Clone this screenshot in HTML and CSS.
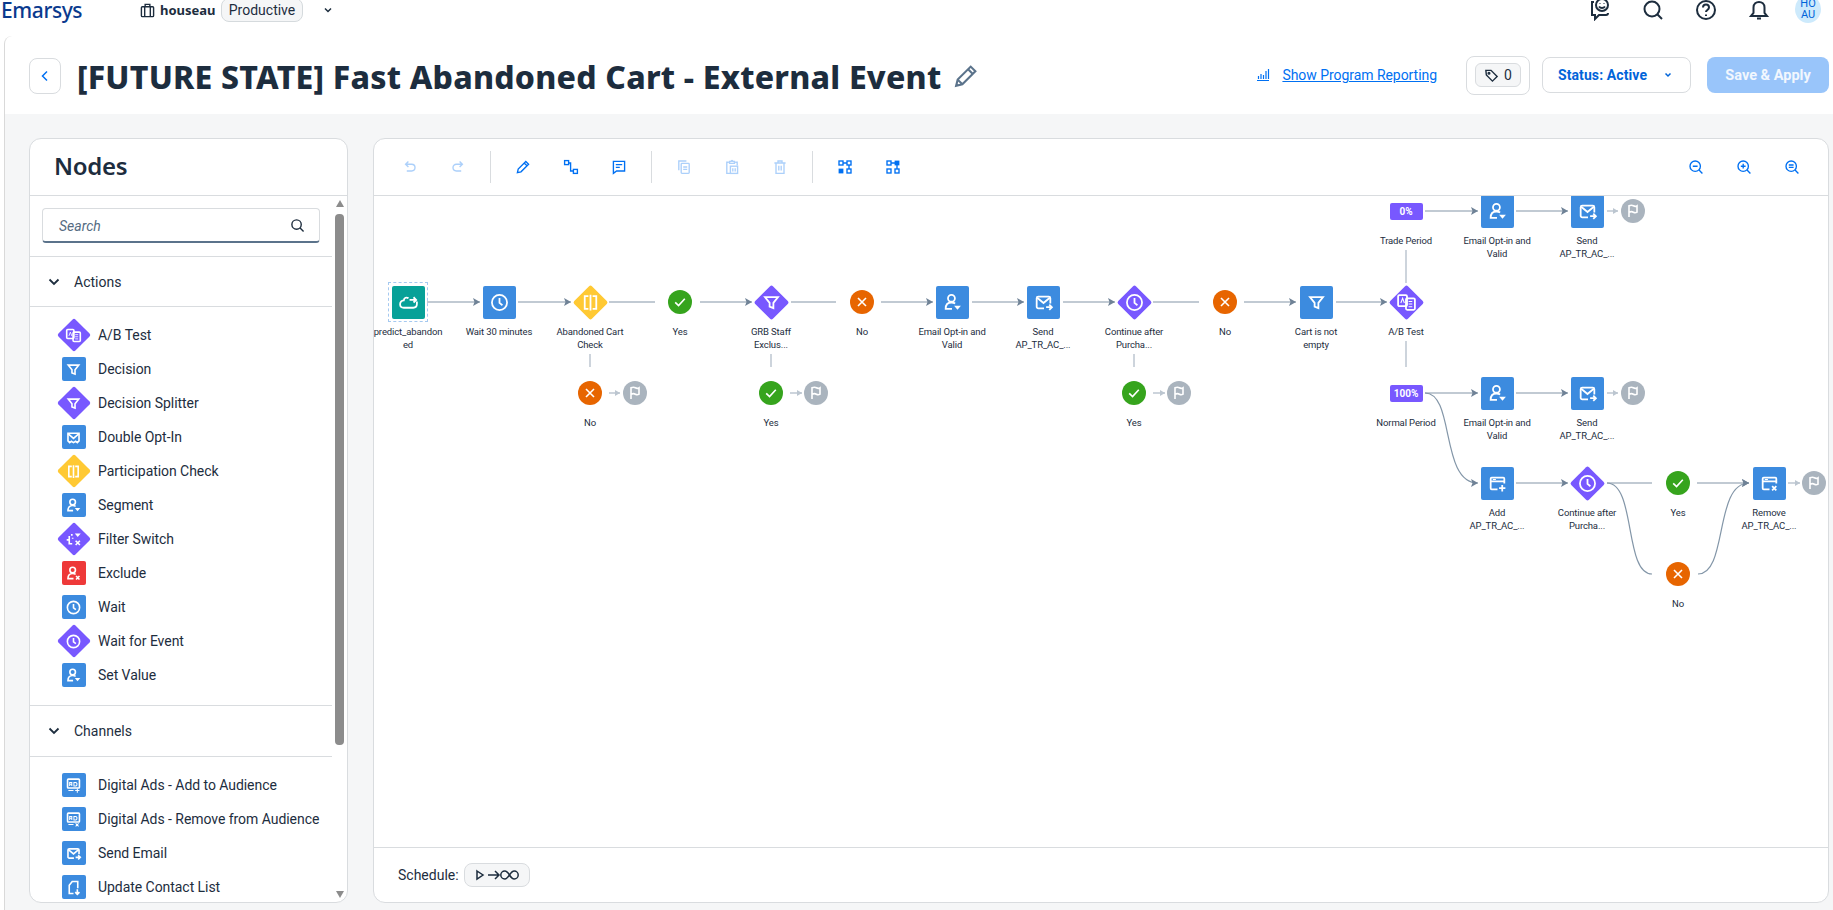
FILE: index.html
```html
<!DOCTYPE html>
<html>
    <head>
        <title>Fast Abandoned Cart - External Event</title>
        <meta charset="UTF-8">
        <link rel="stylesheet" href="styles.css">
    </head>
    <body>
        <!-- icon sprite -->
        <svg class="sprite" xmlns="http://www.w3.org/2000/svg">
            <symbol id="i-clock" viewBox="0 0 20 20"><circle cx="10" cy="10" r="7.2"/><path d="M10 5.8v4.6l2.8 2.2"/></symbol>
            <symbol id="i-filter" viewBox="0 0 20 20"><path d="M3.8 4.8h12.4l-4.4 5.6v5l-3.6-1.4v-3.6z"/></symbol>
            <symbol id="i-ab" viewBox="0 0 20 20"><rect x="2" y="3" width="8.5" height="10.5" rx="1.2"/><rect x="9.5" y="6" width="8.5" height="11" rx="1.2"/><path d="M4.6 10.5l1.7-4.5 1.7 4.500M12 9h3.500M12 11.500h3.500M12 14h3.500" stroke-width="1"/></symbol>
            <symbol id="i-door" viewBox="0 0 20 20"><path d="M8 4H4.500v12H8M12 4h3.500v12H12M10 2.500v15"/></symbol>
            <symbol id="i-segment" viewBox="0 0 20 20"><circle cx="9" cy="6" r="3.300"/><path d="M9.500 16H3.500c0-4 2-6 5.500-6 1.500 0 2.500.3 3.500 1"/><path class="solid" d="M11.500 13h6.500l-3.250 3.800z"/></symbol>
            <symbol id="i-exclude" viewBox="0 0 20 20"><circle cx="9" cy="6" r="3.300"/><path d="M10 16H3.500c0-4 2-6 5.500-6 1.500 0 2.500.3 3.500 1M13 13l4 4M17 13l-4 4"/></symbol>
            <symbol id="i-optin" viewBox="0 0 20 20"><path d="M3.500 14V5h13v9l-2 2-2-1.500L10 16l-2.500-1.500L5.500 16z"/><path d="M3.500 5.500L10 11l6.500-5.500"/></symbol>
            <symbol id="i-send" viewBox="0 0 20 20"><path d="M10.500 15.500H5A1.500 1.500 0 0 1 3.500 14V6A1.500 1.500 0 0 1 5 4.500h10A1.500 1.500 0 0 1 16.500 6v5"/><path d="M4 5.500L10 10.500l6-5M12.500 14.500h5.500M15.500 12l2.500 2.500-2.500 2.500"/></symbol>
            <symbol id="i-switch" viewBox="0 0 20 20"><path d="M7 4.500h2M5 6v9h3.500M2 10.500h3M9 8v1"/><path class="solid" d="M11.500 3h7l-3.500 4z"/><path d="M12.500 11.500l5 5M17.500 11.500l-5 5"/></symbol>
            <symbol id="i-ad-add" viewBox="0 0 20 20"><rect x="3" y="2.500" width="14" height="10.500" rx="1"/><path d="M5.500 10.500V6.500h2.500v4M5.500 8.500h2.500M10.500 6.500v4h2.500l1-1v-2l-1-1zM4 16h6M14.500 13.500v5M12 16h5" stroke-width="1.200"/></symbol>
            <symbol id="i-ad-remove" viewBox="0 0 20 20"><rect x="3" y="2.500" width="14" height="10.500" rx="1"/><path d="M5.500 10.500V6.500h2.500v4M5.500 8.500h2.500M10.500 6.500v4h2.500l1-1v-2l-1-1zM4 16h6M12.500 14.500l3.500 3.500M16 14.500L12.500 18" stroke-width="1.200"/></symbol>
            <symbol id="i-update" viewBox="0 0 20 20"><path d="M10 17H5V7.500L8.500 3H15v8"/><path d="M14.500 12v5.500M12 15.500l2.500 2.500 2.500-2.500"/></symbol>
            <symbol id="i-cloud" viewBox="0 0 20 20"><path d="M10 6C8 4.500 5.800 5.500 5.500 8 3.500 8.300 2 9.700 2 11.700 2 13.600 3.500 15 5.500 15h9c2 0 3.500-1.500 3.500-3.500V9"/><path d="M11 7.500h6M14.800 5l2.500 2.500-2.500 2.500"/></symbol>
            <symbol id="i-list-add" viewBox="0 0 20 20"><path d="M10 15.500H4.500a1 1 0 0 1-1-1v-9a1 1 0 0 1 1-1h11a1 1 0 0 1 1 1V10M3.500 8h13"/><path class="thin" d="M5.500 6.200h3"/><path d="M14.500 11.500v6M11.500 14.500h6"/></symbol>
            <symbol id="i-list-remove" viewBox="0 0 20 20"><path d="M10 15.500H4.500a1 1 0 0 1-1-1v-9a1 1 0 0 1 1-1h11a1 1 0 0 1 1 1V10M3.500 8h13"/><path class="thin" d="M5.500 6.200h3"/><path d="M12.500 12.500l4 4M16.500 12.500l-4 4"/></symbol>
            <symbol id="i-flag" viewBox="0 0 20 20"><path d="M5 17.500V3.500c2.500-1 4.500-.6 5.500 0s3 1 4.500 0v8c-1.500 1-3.500.6-4.500 0s-3-1-5.500 0z"/></symbol>
            <symbol id="i-x" viewBox="0 0 20 20"><path d="M5 5l10 10M15 5L5 15"/></symbol>
            <symbol id="i-check" viewBox="0 0 20 20"><path d="M4 10.500l4.200 4L16 6"/></symbol>
        </svg>

        <div class="topbar">
            <span class="logo">Emarsys</span>
            <svg class="account-icon" viewBox="0 0 16 16"><rect x="1.500" y="4" width="13" height="10.500" rx="1"/><path d="M5 14.500V4M11 14.500V4M5.500 4V1.500h5V4"/></svg>
            <span class="account">houseau</span>
            <span class="env">Productive</span>
            <svg class="env-caret" viewBox="0 0 10 10"><path d="M2 3.500L5 6.500 8 3.500"/></svg>
            <div class="top-actions">
                <svg class="top-icon" viewBox="0 0 22 22"><path d="M5 3H3v13h3v4l4-4h7c1.500 0 2-1 2-2"/><circle cx="13" cy="6" r="6"/><path d="M10 7.500c1.500 2 4.500 2 6 0M11 4v.5M15 4v.5"/></svg>
                <svg class="top-icon" viewBox="0 0 22 22"><circle cx="10" cy="10" r="7.500"/><path d="M15.500 15.500l4.500 4.500"/></svg>
                <svg class="top-icon" viewBox="0 0 22 22"><circle cx="11" cy="11" r="9"/><path d="M8 8.500c0-4 6-4 6 0 0 2.500-3 2.500-3 4.500M11 15.500v1.500"/></svg>
                <svg class="top-icon" viewBox="0 0 22 22"><path d="M3 17h16l-2.500-3V8.500C16.500 1 5.500 1 5.500 8.500V14zM9 19.500h4"/></svg>
                <span class="avatar">HO<br>AU</span>
            </div>
        </div>

        <div class="page">
            <div class="page-head">
                <button class="back"><svg viewBox="0 0 12 12"><path d="M8 1.500L3.500 6 8 10.500"/></svg></button>
                <h1 class="title">[FUTURE STATE] Fast Abandoned Cart - External Event</h1>
                <svg class="title-edit" viewBox="0 0 24 24"><path d="M3 21l1.500-6L17 2.500l4.500 4.500L9 19.500zM14.500 5l4.500 4.500M4.500 15L9 19.500"/></svg>
                <a class="report" href="#">
                    <svg viewBox="0 0 14 14"><path d="M1 12.500h12M2.500 11V8M5 11V6M7.500 11V7M10 11V3M12.500 11V1"/></svg>
                    <span class="report-text">Show Program Reporting</span>
                </a>
                <div class="tag-box">
                    <span class="tag-pill">
                        <svg viewBox="0 0 16 16"><path d="M2 2.500h5.500l6.500 6.500-5 5L2.500 7.500z"/><circle cx="5.300" cy="5.600" r=".9"/></svg>
                        0
                    </span>
                </div>
                <button class="status">Status: Active <svg viewBox="0 0 10 10"><path d="M2.500 3.500L5 6 7.500 3.500"/></svg></button>
                <button class="save">Save &amp; Apply</button>
            </div>

            <div class="workspace">
                <aside class="panel nodes">
                    <div class="panel-head">Nodes</div>
                    <div class="nodes-body">
                        <div class="nodes-list">
                            <div class="search-row">
                                <div class="search">
                                    <span>Search</span>
                                    <svg viewBox="0 0 16 16"><circle cx="7" cy="7" r="5"/><path d="M10.700 10.700L14.500 14.500"/></svg>
                                </div>
                            </div>
                            <div class="section-head">
                                <svg viewBox="0 0 12 12"><path d="M1.500 3.500L6 8l4.500-4.500"/></svg>Actions
                            </div>
                            <ul class="items">
                                <li><span class="gem purple"><svg class="ico"><use href="#i-ab"/></svg></span>A/B Test</li>
                                <li><span class="tile blue"><svg class="ico"><use href="#i-filter"/></svg></span>Decision</li>
                                <li><span class="gem purple"><svg class="ico"><use href="#i-filter"/></svg></span>Decision Splitter</li>
                                <li><span class="tile blue"><svg class="ico"><use href="#i-optin"/></svg></span>Double Opt-In</li>
                                <li><span class="gem yellow"><svg class="ico"><use href="#i-door"/></svg></span>Participation Check</li>
                                <li><span class="tile blue"><svg class="ico"><use href="#i-segment"/></svg></span>Segment</li>
                                <li><span class="gem purple"><svg class="ico"><use href="#i-switch"/></svg></span>Filter Switch</li>
                                <li><span class="tile red"><svg class="ico"><use href="#i-exclude"/></svg></span>Exclude</li>
                                <li><span class="tile blue"><svg class="ico"><use href="#i-clock"/></svg></span>Wait</li>
                                <li><span class="gem purple"><svg class="ico"><use href="#i-clock"/></svg></span>Wait for Event</li>
                                <li><span class="tile blue"><svg class="ico"><use href="#i-segment"/></svg></span>Set Value</li>
                            </ul>
                            <div class="section-head section-next">
                                <svg viewBox="0 0 12 12"><path d="M1.500 3.500L6 8l4.500-4.500"/></svg>Channels
                            </div>
                            <ul class="items">
                                <li><span class="tile blue"><svg class="ico"><use href="#i-ad-add"/></svg></span>Digital Ads - Add to Audience</li>
                                <li><span class="tile blue"><svg class="ico"><use href="#i-ad-remove"/></svg></span>Digital Ads - Remove from Audience</li>
                                <li><span class="tile blue"><svg class="ico"><use href="#i-send"/></svg></span>Send Email</li>
                                <li><span class="tile blue"><svg class="ico"><use href="#i-update"/></svg></span>Update Contact List</li>
                            </ul>
                        </div>
                        <div class="scrollbar">
                            <span class="arrow-up"></span>
                            <span class="thumb"></span>
                            <span class="arrow-down"></span>
                        </div>
                    </div>
                </aside>

                <section class="panel program">
                    <div class="toolbar">
                        <button class="tool off"><svg viewBox="0 0 20 20"><path d="M8 3L4.500 6.500 8 10M5 6.500h7a4 4 0 0 1 0 8.500H6"/></svg></button>
                        <button class="tool off"><svg viewBox="0 0 20 20"><path d="M12 3l3.500 3.500L12 10M15 6.500H8a4 4 0 0 0 0 8.500h6"/></svg></button>
                        <span class="tool-sep"></span>
                        <button class="tool"><svg viewBox="0 0 20 20"><path d="M3 17l1-4.500L13.500 3 17 6.500 7.500 16zM11.500 5l3.500 3.500"/></svg></button>
                        <button class="tool"><svg viewBox="0 0 20 20"><rect x="2" y="2" width="5" height="5"/><rect x="13" y="13" width="5" height="5"/><path d="M7 5h2.500v10H13"/></svg></button>
                        <button class="tool"><svg viewBox="0 0 20 20"><path d="M3 3h14v12H7l-4 3zM6 7h8M6 10.500h5"/></svg></button>
                        <span class="tool-sep"></span>
                        <button class="tool off"><svg viewBox="0 0 20 20"><path d="M3.500 14V2.500H13"/><rect x="6.500" y="5.500" width="10" height="12.500" rx="1"/><path d="M9 10h5M9 13h5"/></svg></button>
                        <button class="tool off"><svg viewBox="0 0 20 20"><path d="M6 4H3.500v14H8M14 4h2.500v4M7 5.500V3h2c0-1.500 2-1.500 2 0h2v2.500z"/><rect x="8" y="9" width="9" height="9"/><path d="M11 11.500v4M14 11.500v4"/></svg></button>
                        <button class="tool off"><svg viewBox="0 0 20 20"><path d="M3 5h14M7.500 5V2.500h5V5M5 5v13h10V5M8.500 8.500v6M11.500 8.500v6"/></svg></button>
                        <span class="tool-sep"></span>
                        <button class="tool"><svg viewBox="0 0 20 20"><rect x="2.500" y="2.500" width="5" height="5"/><rect x="12.500" y="2.500" width="5" height="5"/><rect class="solid" x="2" y="12" width="6" height="6"/><rect x="12.500" y="12.500" width="5" height="5"/><path d="M7.500 5h5M15 7.500v5"/></svg></button>
                        <button class="tool"><svg viewBox="0 0 20 20"><rect x="2.500" y="2.500" width="5" height="5"/><rect class="solid" x="12" y="2" width="6" height="6"/><rect x="2.500" y="12.500" width="5" height="5"/><rect x="12.500" y="12.500" width="5" height="5"/><path d="M7.500 5h5M15 7.500v5"/></svg></button>
                        <span class="tool-gap"></span>
                        <button class="tool"><svg viewBox="0 0 20 20"><circle cx="9" cy="9" r="6.500"/><path d="M13.800 13.800L18 18M6 9h6"/></svg></button>
                        <button class="tool"><svg viewBox="0 0 20 20"><circle cx="9" cy="9" r="6.500"/><path d="M13.800 13.800L18 18M6 9h6M9 6v6"/></svg></button>
                        <button class="tool"><svg viewBox="0 0 20 20"><circle cx="9" cy="9" r="6.500"/><path d="M13.800 13.800L18 18M6 7.500h6M6 10.500h6"/></svg></button>
                    </div>

                    <div class="canvas">
                        <svg class="edges">
                            <defs>
                                <marker id="tip" markerUnits="userSpaceOnUse" markerWidth="7" markerHeight="8" refX="7" refY="4" orient="auto"><path class="tip" d="M0 0L7 4 0 8 1.500 4z"/></marker>
                                <marker id="tip-light" markerUnits="userSpaceOnUse" markerWidth="5" markerHeight="6" refX="5" refY="3" orient="auto"><path class="tip-light" d="M0 0L5 3 0 6z"/></marker>
                            </defs>
                            <g class="edge">
                                <path marker-end="url(#tip)" d="M53 106H106"/>
                                <path marker-end="url(#tip)" d="M144 106H197"/>
                                <path d="M235 106H281"/>
                                <path marker-end="url(#tip)" d="M326 106H378"/>
                                <path d="M417 106H462"/>
                                <path marker-end="url(#tip)" d="M507 106H559"/>
                                <path marker-end="url(#tip)" d="M598 106H650"/>
                                <path marker-end="url(#tip)" d="M689 106H741"/>
                                <path d="M779 106H825"/>
                                <path marker-end="url(#tip)" d="M870 106H922"/>
                                <path marker-end="url(#tip)" d="M962 106H1013"/>
                                <path marker-end="url(#tip)" d="M1051 15H1104"/>
                                <path marker-end="url(#tip)" d="M1142 15H1194"/>
                                <path marker-end="url(#tip)" d="M1051 197H1104"/>
                                <path marker-end="url(#tip)" d="M1142 197H1194"/>
                                <path marker-end="url(#tip)" d="M1051 197C1081 197 1066 287 1104 287"/>
                                <path marker-end="url(#tip)" d="M1142 287H1194"/>
                                <path d="M1233 287H1278"/>
                                <path d="M1233 287C1262 287 1250 378 1278 378"/>
                                <path marker-end="url(#tip)" d="M1323 287H1375"/>
                                <path marker-end="url(#tip)" d="M1324 378C1354 378 1340 287 1375 287"/>
                            </g>
                            <g class="edge-light">
                                <path d="M216 158V171"/>
                                <path d="M397 158V171"/>
                                <path d="M760 158V171"/>
                                <path d="M1032 54V87"/>
                                <path d="M1032 145V171"/>
                                <path marker-end="url(#tip-light)" d="M235 197H246"/>
                                <path marker-end="url(#tip-light)" d="M416 197H428"/>
                                <path marker-end="url(#tip-light)" d="M779 197H791"/>
                                <path marker-end="url(#tip-light)" d="M1233 15H1244"/>
                                <path marker-end="url(#tip-light)" d="M1233 197H1244"/>
                                <path marker-end="url(#tip-light)" d="M1414 287H1426"/>
                            </g>
                        </svg>

                        <div class="node" style="left:-14px;top:89px"><span class="start"><span class="tile teal"><svg class="ico"><use href="#i-cloud"/></svg></span></span><p>predict_abandon<br>ed</p></div>
                        <div class="node" style="left:77px;top:89px"><span class="tile blue"><svg class="ico"><use href="#i-clock"/></svg></span><p>Wait 30 minutes</p></div>
                        <div class="node" style="left:168px;top:89px"><span class="gem yellow"><svg class="ico"><use href="#i-door"/></svg></span><p>Abandoned Cart<br>Check</p></div>
                        <div class="node" style="left:258px;top:89px"><span class="dot green"><svg class="ico"><use href="#i-check"/></svg></span><p>Yes</p></div>
                        <div class="node" style="left:349px;top:89px"><span class="gem purple"><svg class="ico"><use href="#i-filter"/></svg></span><p>GRB Staff<br>Exclus...</p></div>
                        <div class="node" style="left:440px;top:89px"><span class="dot orange"><svg class="ico"><use href="#i-x"/></svg></span><p>No</p></div>
                        <div class="node" style="left:530px;top:89px"><span class="tile blue"><svg class="ico"><use href="#i-segment"/></svg></span><p>Email Opt-in and<br>Valid</p></div>
                        <div class="node" style="left:621px;top:89px"><span class="tile blue"><svg class="ico"><use href="#i-send"/></svg></span><p>Send<br>AP_TR_AC_...</p></div>
                        <div class="node" style="left:712px;top:89px"><span class="gem purple"><svg class="ico"><use href="#i-clock"/></svg></span><p>Continue after<br>Purcha...</p></div>
                        <div class="node" style="left:803px;top:89px"><span class="dot orange"><svg class="ico"><use href="#i-x"/></svg></span><p>No</p></div>
                        <div class="node" style="left:894px;top:89px"><span class="tile blue"><svg class="ico"><use href="#i-filter"/></svg></span><p>Cart is not<br>empty</p></div>
                        <div class="node" style="left:984px;top:89px"><span class="gem purple"><svg class="ico"><use href="#i-ab"/></svg></span><p>A/B Test</p></div>

                        <div class="node" style="left:168px;top:180px"><span class="dot orange"><svg class="ico"><use href="#i-x"/></svg></span><p>No</p></div>
                        <div class="node" style="left:213px;top:180px"><span class="dot grey"><svg class="ico"><use href="#i-flag"/></svg></span></div>
                        <div class="node" style="left:349px;top:180px"><span class="dot green"><svg class="ico"><use href="#i-check"/></svg></span><p>Yes</p></div>
                        <div class="node" style="left:394px;top:180px"><span class="dot grey"><svg class="ico"><use href="#i-flag"/></svg></span></div>
                        <div class="node" style="left:712px;top:180px"><span class="dot green"><svg class="ico"><use href="#i-check"/></svg></span><p>Yes</p></div>
                        <div class="node" style="left:757px;top:180px"><span class="dot grey"><svg class="ico"><use href="#i-flag"/></svg></span></div>

                        <div class="node" style="left:984px;top:-2px"><span class="pct">0%</span><p>Trade Period</p></div>
                        <div class="node" style="left:1075px;top:-2px"><span class="tile blue"><svg class="ico"><use href="#i-segment"/></svg></span><p>Email Opt-in and<br>Valid</p></div>
                        <div class="node" style="left:1165px;top:-2px"><span class="tile blue"><svg class="ico"><use href="#i-send"/></svg></span><p>Send<br>AP_TR_AC_...</p></div>
                        <div class="node" style="left:1211px;top:-2px"><span class="dot grey"><svg class="ico"><use href="#i-flag"/></svg></span></div>

                        <div class="node" style="left:984px;top:180px"><span class="pct">100%</span><p>Normal Period</p></div>
                        <div class="node" style="left:1075px;top:180px"><span class="tile blue"><svg class="ico"><use href="#i-segment"/></svg></span><p>Email Opt-in and<br>Valid</p></div>
                        <div class="node" style="left:1165px;top:180px"><span class="tile blue"><svg class="ico"><use href="#i-send"/></svg></span><p>Send<br>AP_TR_AC_...</p></div>
                        <div class="node" style="left:1211px;top:180px"><span class="dot grey"><svg class="ico"><use href="#i-flag"/></svg></span></div>

                        <div class="node" style="left:1075px;top:270px"><span class="tile blue"><svg class="ico"><use href="#i-list-add"/></svg></span><p>Add<br>AP_TR_AC_...</p></div>
                        <div class="node" style="left:1165px;top:270px"><span class="gem purple"><svg class="ico"><use href="#i-clock"/></svg></span><p>Continue after<br>Purcha...</p></div>
                        <div class="node" style="left:1256px;top:270px"><span class="dot green"><svg class="ico"><use href="#i-check"/></svg></span><p>Yes</p></div>
                        <div class="node" style="left:1347px;top:270px"><span class="tile blue"><svg class="ico"><use href="#i-list-remove"/></svg></span><p>Remove<br>AP_TR_AC_...</p></div>
                        <div class="node" style="left:1392px;top:270px"><span class="dot grey"><svg class="ico"><use href="#i-flag"/></svg></span></div>
                        <div class="node" style="left:1256px;top:361px"><span class="dot orange"><svg class="ico"><use href="#i-x"/></svg></span><p>No</p></div>
                    </div>

                    <div class="schedule">
                        Schedule:
                        <span class="schedule-pill">
                            <svg viewBox="0 0 46 16"><path d="M3 4l6 4-6 4z"/><path d="M14 8h11M21 4l4 4-4 4"/><path d="M35.500 8c-1.700-2.700-3.200-4-4.700-4a4 4 0 0 0 0 8c1.500 0 3-1.300 4.700-4s3.200-4 4.700-4a4 4 0 0 1 0 8c-1.500 0-3-1.300-4.700-4z"/></svg>
                        </span>
                    </div>
                </section>
            </div>
        </div>
    </body>
</html>
```

FILE: styles.css
```css
html, body {
    margin: 0;
    padding: 0;
    height: 100%;
    overflow: hidden;
    background-color: #fff;
    color: #1d2d3e;
    font-family: "Roboto", "Liberation Sans", sans-serif;
    font-size: 14px;
}
body {
    display: flex;
    flex-direction: column;
}
button {
    font-family: inherit;
    cursor: pointer;
}
svg {
    fill: none;
    stroke: currentColor;
    stroke-width: 1.5;
}
.sprite {
    display: none;
}
.solid {
    fill: currentColor;
    stroke: none;
}
.thin {
    stroke-width: 1;
}

/* top bar */
.topbar {
    flex: none;
    height: 36px;
    box-sizing: border-box;
    padding: 0 12px 16px 1px;
    display: flex;
    align-items: center;
}
.logo {
    width: 139px;
    color: #0a3a8e;
    font-family: "Noto Sans", sans-serif;
    font-size: 21px;
    font-weight: 500;
    letter-spacing: -0.4px;
    line-height: 20px;
}
.account-icon {
    width: 15px;
    height: 15px;
    margin-right: 5px;
    color: #1d2d3e;
}
.account {
    width: 61px;
    font-family: "Noto Sans", sans-serif;
    font-weight: 700;
    font-size: 13px;
}
.env {
    box-sizing: border-box;
    width: 82px;
    height: 24px;
    line-height: 22px;
    text-align: center;
    border: 1px solid #d5dadd;
    border-radius: 8px;
    background: #f5f6f7;
    font-size: 14px;
}
.env-caret {
    width: 10px;
    height: 10px;
    margin-left: 20px;
}
.top-actions {
    margin-left: auto;
    display: flex;
    align-items: center;
    gap: 31px;
}
.top-icon {
    width: 22px;
    height: 22px;
    stroke-width: 2;
}
.avatar {
    box-sizing: border-box;
    width: 26px;
    height: 28px;
    padding-top: 3px;
    border-radius: 50%;
    background: #cdeafc;
    color: #0064d9;
    font-size: 11px;
    line-height: 11px;
    text-align: center;
    margin: -3px 0 0 -6px;
}

/* page */
.page {
    flex: 1;
    min-height: 0;
    margin-left: 4px;
    border-left: 1px solid #d9d9d9;
    border-top-left-radius: 8px;
    display: flex;
    flex-direction: column;
}
.page-head {
    flex: none;
    height: 78px;
    display: flex;
    align-items: center;
    padding: 0 4px 0 24px;
}
.back {
    width: 32px;
    height: 36px;
    padding: 0;
    margin: 2px 16px 0 0;
    border: 1px solid #d9dcdf;
    border-radius: 8px;
    background: #fff;
    color: #0070f2;
}
.back svg {
    width: 12px;
    height: 12px;
    display: block;
    margin: auto;
}
.title {
    margin: 2px 0 0;
    font-family: "Noto Sans", sans-serif;
    font-size: 32px;
    font-weight: 800;
    letter-spacing: 0.22px;
    white-space: nowrap;
}
.title-edit {
    width: 25px;
    height: 25px;
    margin: 2px 0 0 12px;
    color: #5b738b;
    stroke-width: 2;
}
.report {
    margin: 0 0 0 auto;
    display: flex;
    align-items: center;
    color: #0070f2;
    text-decoration: none;
    gap: 12px;
    letter-spacing: -0.05px;
}
.report svg {
    width: 14px;
    height: 14px;
    stroke-width: 1.2;
}
.report-text {
    text-decoration: underline;
}
.tag-box {
    box-sizing: border-box;
    width: 64px;
    height: 39px;
    margin-left: 29px;
    border: 1px solid #d9dcdf;
    border-radius: 8px;
    display: flex;
    align-items: center;
    justify-content: center;
}
.tag-pill {
    box-sizing: border-box;
    width: 46px;
    height: 24px;
    border: 1px solid #d9dcdf;
    border-radius: 6px;
    background: #f5f6f7;
    display: flex;
    align-items: center;
    justify-content: center;
    gap: 5px;
}
.tag-pill svg {
    width: 15px;
    height: 15px;
}
.status {
    box-sizing: border-box;
    width: 149px;
    height: 36px;
    margin-left: 12px;
    padding-right: 8px;
    border: 1px solid #d9dcdf;
    border-radius: 8px;
    background: #fff;
    color: #0064d9;
    font-size: 14px;
    font-weight: 700;
    letter-spacing: 0.1px;
    display: flex;
    align-items: center;
    justify-content: center;
    gap: 16px;
}
.status svg {
    width: 10px;
    height: 10px;
}
.save {
    box-sizing: border-box;
    width: 122px;
    height: 36px;
    margin-left: 16px;
    border: 0;
    border-radius: 8px;
    background: #99c5fa;
    color: #f2f7fe;
    font-size: 14.5px;
    font-weight: 700;
}

/* workspace */
.workspace {
    flex: 1;
    min-height: 0;
    display: flex;
    gap: 25px;
    padding: 24px 4px 7px 24px;
    background: #f5f6f7;
}
.panel {
    box-sizing: border-box;
    background: #fff;
    border: 1px solid #d9dcdf;
    border-radius: 12px;
    display: flex;
    flex-direction: column;
    overflow: hidden;
}
.nodes {
    flex: none;
    width: 319px;
}
.panel-head {
    flex: none;
    height: 56px;
    line-height: 54px;
    padding-left: 24px;
    border-bottom: 1px solid #d9dcdf;
    font-family: "Noto Sans", sans-serif;
    font-size: 24px;
    font-weight: 600;
    letter-spacing: -0.3px;
}
.nodes-body {
    flex: 1;
    min-height: 0;
    display: flex;
}
.nodes-list {
    flex: 1;
    min-width: 0;
    overflow: hidden;
}
.search-row {
    padding: 12px 12px 13px 12px;
    border-bottom: 1px solid #d9dcdf;
}
.search {
    box-sizing: border-box;
    height: 35px;
    padding: 1px 14px 0 16px;
    border: 1px solid #d9dcdf;
    border-bottom: 2px solid #5b738b;
    border-radius: 4px;
    display: flex;
    align-items: center;
    justify-content: space-between;
    color: #556b82;
    font-style: italic;
}
.search svg {
    width: 15px;
    height: 15px;
    color: #1d2d3e;
}
.section-head {
    box-sizing: border-box;
    height: 50px;
    padding-left: 18px;
    border-bottom: 1px solid #d9dcdf;
    display: flex;
    align-items: center;
    gap: 14px;
}
.section-head svg {
    width: 12px;
    height: 12px;
    stroke-width: 1.8;
}
.section-next {
    border-top: 1px solid #d9dcdf;
    height: 52px;
}
.items {
    list-style: none;
    margin: 0;
    padding: 11px 0 13px 27px;
    letter-spacing: -0.05px;
}
.items li {
    height: 34px;
    display: flex;
    align-items: center;
}
.items .gem {
    width: 33px;
    height: 33px;
    margin-right: 8px;
}
.items .gem::before {
    inset: 4.5px;
}
.items .tile {
    width: 24px;
    height: 24px;
    margin-left: 4.5px;
    margin-right: 12.5px;
}
.items .ico {
    width: 17px;
    height: 17px;
    stroke-width: 1.9;
}
.scrollbar {
    flex: none;
    width: 15px;
    box-sizing: border-box;
    padding: 4px 0;
    display: flex;
    flex-direction: column;
    align-items: center;
}
.arrow-up, .arrow-down {
    width: 0;
    height: 0;
    border-left: 4.5px solid transparent;
    border-right: 4.5px solid transparent;
}
.arrow-up {
    border-bottom: 7px solid #8c8c8c;
}
.arrow-down {
    margin-top: auto;
    border-top: 7px solid #8c8c8c;
}
.thumb {
    width: 9px;
    height: 531px;
    margin-top: 7px;
    border-radius: 4px;
    background: #8c8c8c;
}

/* program editor */
.program {
    flex: 1;
    min-width: 0;
}
.toolbar {
    flex: none;
    height: 57px;
    box-sizing: border-box;
    padding: 0 12px;
    border-bottom: 1px solid #d9dcdf;
    display: flex;
    align-items: center;
    color: #0070f2;
}
.tool {
    width: 48px;
    height: 32px;
    padding: 0;
    border: 0;
    background: none;
    color: inherit;
    display: flex;
    align-items: center;
    justify-content: center;
}
.tool svg {
    width: 16px;
    height: 16px;
    stroke-width: 1.7;
}
.tool.off {
    opacity: 0.32;
}
.tool-sep {
    width: 1px;
    height: 32px;
    margin: 0 8px;
    background: #d9dcdf;
}
.tool-gap {
    margin-left: auto;
}
.canvas {
    flex: 1;
    min-height: 0;
    position: relative;
    overflow: hidden;
}
.edges {
    position: absolute;
    left: 0;
    top: 0;
    width: 100%;
    height: 100%;
}
.edge {
    stroke: #8396a8;
    stroke-width: 1.2;
}
.edge-light {
    stroke: #bcc6d0;
    stroke-width: 1.5;
}
.tip {
    fill: #6f8296;
    stroke: none;
}
.tip-light {
    fill: #bcc6d0;
    stroke: none;
}
.node {
    position: absolute;
    width: 96px;
    display: flex;
    flex-direction: column;
    align-items: center;
}
.node > span {
    height: 34px;
}
.node p {
    margin: 6px 0 0;
    font-size: 9.5px;
    letter-spacing: -0.12px;
    line-height: 13px;
    text-align: center;
    white-space: nowrap;
}
.tile, .gem, .dot {
    position: relative;
    flex: none;
    display: flex;
    align-items: center;
    justify-content: center;
    color: #fff;
    box-sizing: border-box;
}
.tile {
    border-radius: 2px;
}
.node .tile {
    width: 33px;
    height: 33px;
    margin-top: 1px;
}
.node .start .tile {
    margin-top: 0;
}
.node .gem {
    width: 35px;
}
.gem::before {
    content: "";
    position: absolute;
    inset: 4.5px 5px;
    transform: rotate(45deg);
    border-radius: 2px;
    background: var(--shape);
}
.gem svg {
    position: relative;
}
.dot {
    border-radius: 50%;
}
.node .dot {
    width: 24px;
    height: 24px;
    margin: 5px 0;
}
.ico {
    width: 21px;
    height: 21px;
    stroke-width: 1.7;
}
.node .dot .ico {
    width: 16px;
    height: 16px;
    stroke-width: 2;
}
.blue { background: #3c8bdf; }
.teal { background: #07a198; }
.red { background: #ee3939; }
.green { background: #36a41d; }
.orange { background: #e76500; }
.grey { background: #aab4be; }
.purple { --shape: #7858ff; }
.yellow { --shape: #ffc933; }
.start {
    width: 40px;
    height: 40px !important;
    margin: -3px 0;
    box-sizing: border-box;
    border: 1px dashed #a5c9f0;
    display: flex;
    align-items: center;
    justify-content: center;
}
.pct {
    box-sizing: border-box;
    min-width: 33px;
    height: 17px !important;
    margin: 9px 0 8px;
    padding: 0 3px;
    border-radius: 2px;
    background: #7858ff;
    color: #fff;
    font-size: 10px;
    font-weight: 700;
    line-height: 17px;
    text-align: center;
}
.schedule {
    flex: none;
    height: 55px;
    box-sizing: border-box;
    padding-left: 24px;
    border-top: 1px solid #d9dcdf;
    display: flex;
    align-items: center;
    gap: 5px;
}
.schedule-pill {
    box-sizing: border-box;
    width: 66px;
    height: 24px;
    border: 1px solid #d9dcdf;
    border-radius: 8px;
    background: #f5f6f7;
    display: flex;
    align-items: center;
    justify-content: center;
}
.schedule-pill svg {
    width: 46px;
    height: 16px;
}
```
